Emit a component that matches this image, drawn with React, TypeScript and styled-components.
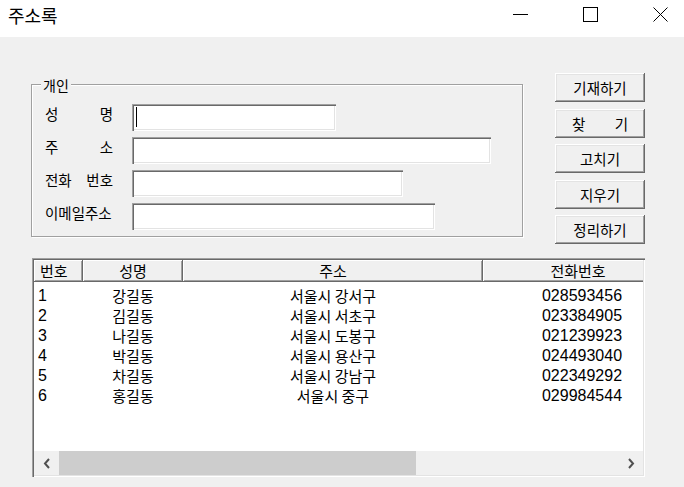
import React from "react";
import styled, { createGlobalStyle, css } from "styled-components";

const GlobalStyle = createGlobalStyle`
  html, body { margin: 0; padding: 0; background: #f0f0f0; }
  body {
    font-family: "Noto Sans CJK KR", "Noto Sans", sans-serif;
    color: #000;
  }
  * { box-sizing: border-box; }
`;

const COLS = "49px 100px 300px 190px 320px";

const Window = styled.div`
  width: 684px;
  height: 487px;
  display: flex;
  flex-direction: column;
  overflow: hidden;
  background: #f0f0f0;
`;

const TitleBar = styled.header`
  flex: none;
  height: 37px;
  background: #fff;
  display: flex;
  align-items: flex-start;
`;

const Title = styled.h1`
  margin: 0;
  padding: 4px 0 0 8px;
  font-size: 18px;
  font-weight: 400;
  line-height: 22px;
  color: #000;
`;

const Controls = styled.div`
  margin-left: auto;
  display: flex;
  gap: 55px;
  padding: 7px 16px 0 0;
`;

const ControlIcon = styled.svg`
  display: block;
  width: 15px;
  height: 15px;
`;

const Body = styled.main`
  flex: 1;
  display: flex;
  flex-direction: column;
  padding: 36px 0 0 31px;
`;

const TopRow = styled.div`
  display: flex;
  align-items: flex-start;
`;

const GroupBox = styled.section`
  position: relative;
  margin-top: 11px;
  width: 492px;
  height: 153px;
  border: 1px solid #a0a0a0;
  box-shadow: inset 1px 1px 0 #fff, 1px 1px 0 #fff;
  padding: 19px 0 0 13px;
  display: grid;
  grid-template-columns: 68px auto;
  grid-auto-rows: 27px;
  column-gap: 19px;
  row-gap: 6px;
  align-content: start;
  justify-items: start;
  align-items: center;
`;

const Legend = styled.span`
  position: absolute;
  top: -8px;
  left: 9px;
  padding: 0 2px;
  background: #f0f0f0;
  font-size: 14px;
  line-height: 16px;
`;

const Label = styled.div`
  width: 68px;
  margin-bottom: 7px;
  display: flex;
  justify-content: space-between;
  font-size: 14.5px;
  line-height: 20px;
  white-space: nowrap;
`;

const Field = styled.div<{ $w: number; $caret?: boolean }>`
  position: relative;
  width: ${(p) => p.$w}px;
  height: 27px;
  background: #fff;
  box-shadow: inset 1px 1px 0 #a0a0a0, inset 2px 2px 0 #696969,
    inset -1px -1px 0 #fff, inset -2px -2px 0 #e3e3e3;
  ${(p) =>
    p.$caret &&
    css`
      &::after {
        content: "";
        position: absolute;
        left: 4px;
        top: 3px;
        width: 1px;
        height: 20px;
        background: #000;
      }
    `}
`;

const ButtonColumn = styled.div`
  display: flex;
  flex-direction: column;
  gap: 6.5px;
  margin-left: 32px;
`;

const Button = styled.button<{ $spread?: boolean }>`
  width: 90px;
  height: 29px;
  padding: 0 17px;
  border: none;
  background: #f0f0f0;
  font-family: inherit;
  font-size: 14.5px;
  color: #000;
  display: flex;
  align-items: center;
  justify-content: ${(p) => (p.$spread ? "space-between" : "center")};
  box-shadow: inset -1px -1px 0 #696969, inset 1px 1px 0 #fff,
    inset -2px -2px 0 #a0a0a0, inset 2px 2px 0 #e3e3e3;
`;

const ListView = styled.section`
  margin: 14px 0 0 1px;
  width: 613px;
  height: 219px;
  padding: 2px;
  background: #fff;
  box-shadow: inset 1px 1px 0 #a0a0a0, inset 2px 2px 0 #696969,
    inset -1px -1px 0 #fff, inset -2px -2px 0 #e3e3e3;
  display: flex;
  flex-direction: column;
`;

const Viewport = styled.div`
  flex: 1;
  min-height: 0;
  overflow: hidden;
`;

const HeaderRow = styled.div`
  display: grid;
  grid-template-columns: ${COLS};
  height: 22px;
  width: max-content;
`;

const HeaderCell = styled.div<{ $align?: "left" | "center" }>`
  background: #f0f0f0;
  padding: 0 6px;
  font-size: 15px;
  line-height: 22px;
  text-align: ${(p) => p.$align ?? "center"};
  box-shadow: inset -1px -1px 0 #696969, inset 1px 1px 0 #fff,
    inset -2px -2px 0 #a0a0a0;
`;

const Rows = styled.div`
  padding-top: 4px;
`;

const Row = styled.div`
  display: grid;
  grid-template-columns: ${COLS};
  height: 20px;
  width: max-content;
`;

const Cell = styled.div<{
  $align?: "left" | "center";
  $numeric?: boolean;
  $indent?: number;
}>`
  padding: 0 4px;
  line-height: 20px;
  white-space: nowrap;
  text-align: ${(p) => p.$align ?? "center"};
  text-indent: ${(p) => p.$indent ?? 0}px;
  font-size: ${(p) => (p.$numeric ? 16 : 15)}px;
  ${(p) =>
    p.$numeric &&
    css`
      font-family: "Liberation Sans", "Noto Sans CJK KR", sans-serif;
    `}
`;

const HScroll = styled.div`
  flex: none;
  height: 24px;
  display: flex;
  background: #f0f0f0;
`;

const ScrollArrow = styled.div`
  width: 25px;
  display: flex;
  align-items: center;
  justify-content: center;
`;

const Track = styled.div`
  flex: 1;
  display: flex;
`;

const Thumb = styled.div`
  background: #cdcdcd;
`;

const fields = [
  { label: ["성", "명"], w: 204, caret: true },
  { label: ["주", "소"], w: 359 },
  { label: ["전화", "번호"], w: 271 },
  { label: ["이메일주소"], w: 303 },
];

const people = [
  { no: "1", name: "강길동", addr: "서울시 강서구", tel: "028593456" },
  { no: "2", name: "김길동", addr: "서울시 서초구", tel: "023384905" },
  { no: "3", name: "나길동", addr: "서울시 도봉구", tel: "021239923" },
  { no: "4", name: "박길동", addr: "서울시 용산구", tel: "024493040" },
  { no: "5", name: "차길동", addr: "서울시 강남구", tel: "022349292" },
  { no: "6", name: "홍길동", addr: "서울시 중구", tel: "029984544" },
];

const visibleRatio = 357 / 559;

const Chevron = ({ dir }: { dir: "left" | "right" }) => (
  <svg width="8" height="11" viewBox="0 0 8 11">
    <polyline
      points={dir === "left" ? "6,1 2,5.5 6,10" : "2,1 6,5.5 2,10"}
      fill="none"
      stroke="#505050"
      strokeWidth="2"
    />
  </svg>
);

export default function App() {
  return (
    <>
      <GlobalStyle />
      <Window>
        <TitleBar>
          <Title>주소록</Title>
          <Controls>
            <ControlIcon viewBox="0 0 15 15">
              <line x1="0" y1="7.5" x2="15" y2="7.5" stroke="#000" strokeWidth="1" />
            </ControlIcon>
            <ControlIcon viewBox="0 0 15 15">
              <rect x="0.5" y="0.5" width="14" height="14" fill="none" stroke="#000" strokeWidth="1" />
            </ControlIcon>
            <ControlIcon viewBox="0 0 15 15">
              <line x1="0.5" y1="0.5" x2="14.5" y2="14.5" stroke="#000" strokeWidth="1" />
              <line x1="14.5" y1="0.5" x2="0.5" y2="14.5" stroke="#000" strokeWidth="1" />
            </ControlIcon>
          </Controls>
        </TitleBar>
        <Body>
          <TopRow>
            <GroupBox>
              <Legend>개인</Legend>
              {fields.map((f, i) => (
                <React.Fragment key={i}>
                  <Label>
                    {f.label.map((part) => (
                      <span key={part}>{part}</span>
                    ))}
                  </Label>
                  <Field $w={f.w} $caret={f.caret} />
                </React.Fragment>
              ))}
            </GroupBox>
            <ButtonColumn>
              <Button>기재하기</Button>
              <Button $spread>
                <span>찾</span>
                <span>기</span>
              </Button>
              <Button>고치기</Button>
              <Button>지우기</Button>
              <Button>정리하기</Button>
            </ButtonColumn>
          </TopRow>
          <ListView>
            <Viewport>
              <HeaderRow>
                <HeaderCell $align="left">번호</HeaderCell>
                <HeaderCell>성명</HeaderCell>
                <HeaderCell>주소</HeaderCell>
                <HeaderCell>전화번호</HeaderCell>
                <HeaderCell />
              </HeaderRow>
              <Rows>
                {people.map((p) => (
                  <Row key={p.no}>
                    <Cell $align="left" $numeric>
                      {p.no}
                    </Cell>
                    <Cell>{p.name}</Cell>
                    <Cell>{p.addr}</Cell>
                    <Cell $numeric $indent={8}>
                      {p.tel}
                    </Cell>
                    <Cell />
                  </Row>
                ))}
              </Rows>
            </Viewport>
            <HScroll>
              <ScrollArrow>
                <Chevron dir="left" />
              </ScrollArrow>
              <Track>
                <Thumb style={{ width: `${visibleRatio * 100}%` }} />
              </Track>
              <ScrollArrow>
                <Chevron dir="right" />
              </ScrollArrow>
            </HScroll>
          </ListView>
        </Body>
      </Window>
    </>
  );
}
